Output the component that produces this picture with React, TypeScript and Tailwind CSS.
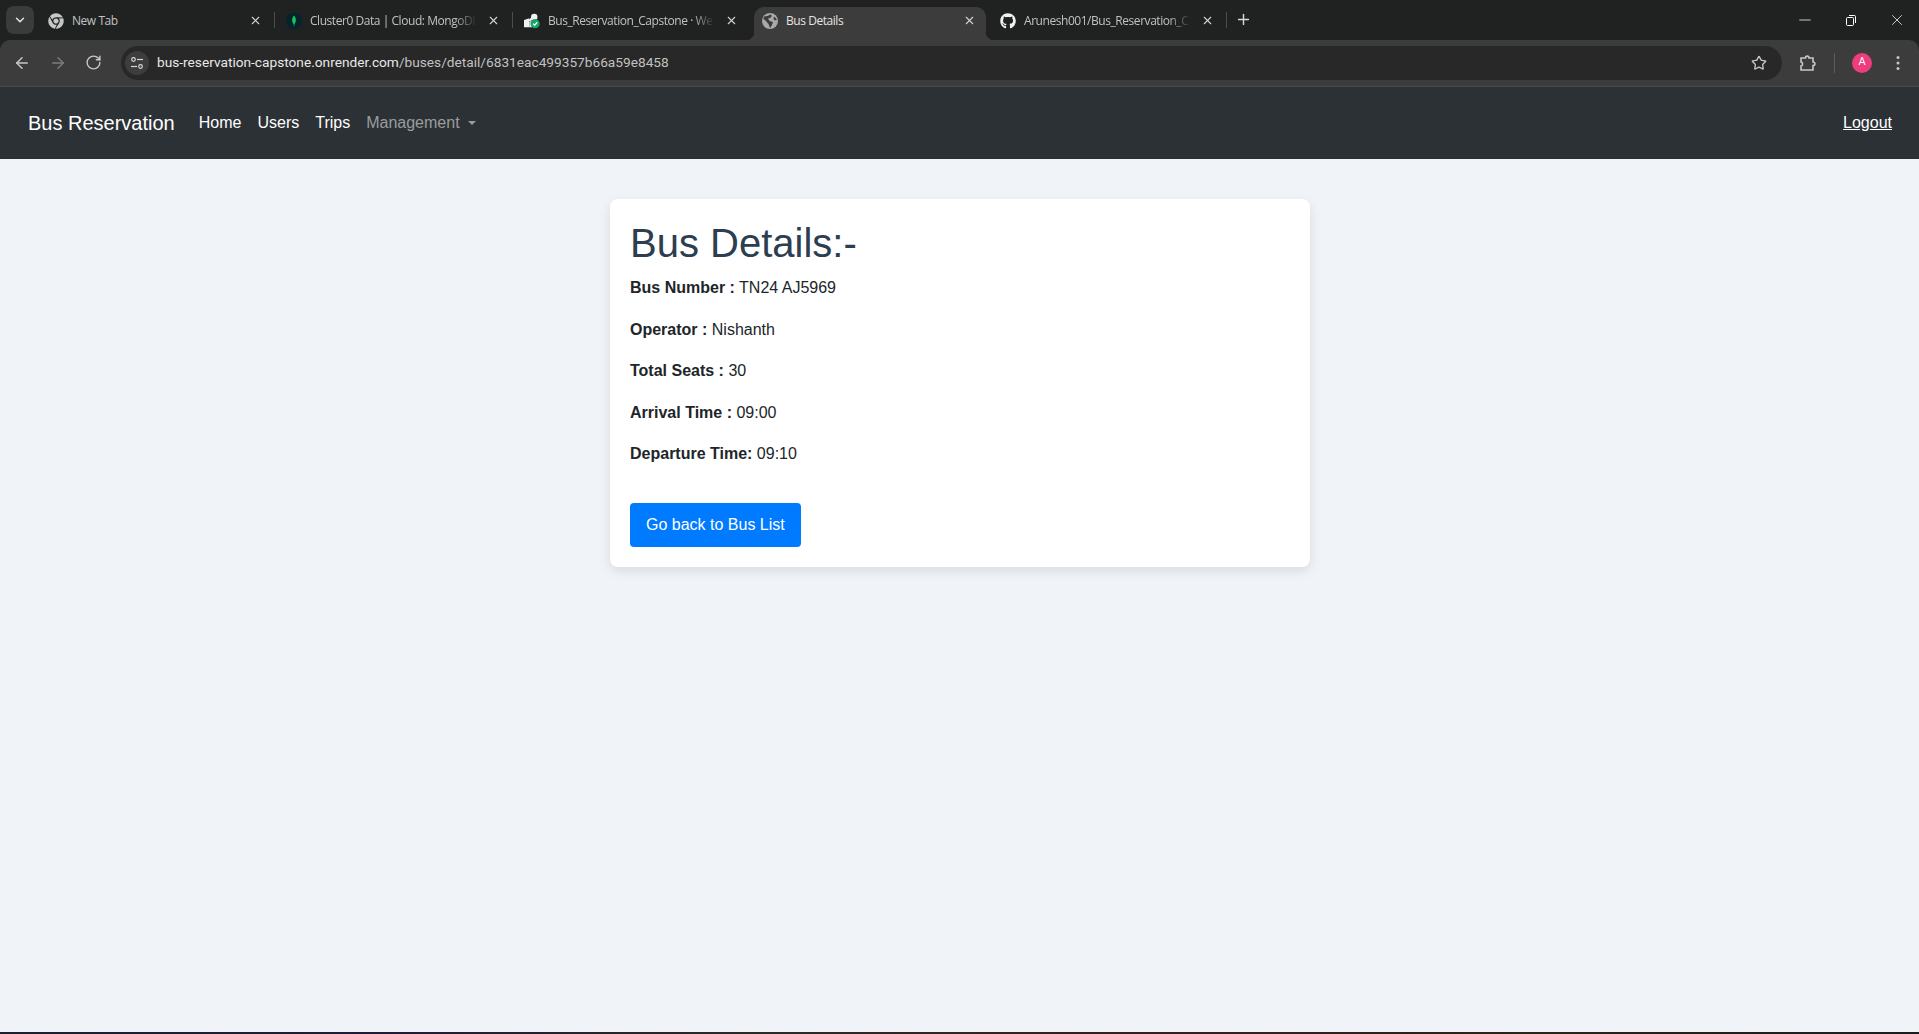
import React from "react";
import { ArrowLeft, ArrowRight, RotateCw, Star, X, Plus, ChevronDown, Minus } from "lucide-react";
import { FaGithub, FaChrome } from "react-icons/fa";

function Leaf() {
  return (
    <svg width="16" height="16" viewBox="0 0 16 16">
      <circle cx="8" cy="8" r="8" fill="#04232d" />
      <path d="M8 2.5C10.4 5 10.6 8.5 8.4 11.2L8.2 13.5H7.8L7.6 11.2C5.4 8.5 5.6 5 8 2.5Z" fill="#13c65c" />
    </svg>
  );
}
function Globe() {
  return (
    <svg width="16" height="16" viewBox="0 0 16 16">
      <circle cx="8" cy="8" r="8" fill="#a8a9a9" />
      <path d="M2 3.5L5.5 3L8.5 1.5L10 3L8 5L6 5.5L7.5 8L11 9L10 12L8 15L6.5 11L3.5 7.5L1.5 6Z" fill="#3c3c3c" />
      <path d="M12 3.5L15 6.5L13 7.5L11.5 6Z" fill="#3c3c3c" />
    </svg>
  );
}
function Deploy() {
  return (
    <svg width="16" height="16" viewBox="0 0 18 18">
      <path d="M0 8L6 6V16H0Z" fill="#f1f1f1" />
      <path d="M6 9L11 4" stroke="#f1f1f1" strokeWidth="2.5" />
      <circle cx="11.5" cy="4.5" r="3.6" fill="#f1f1f1" />
      <path d="M6 16V10.5L9 8.5L9 16Z" fill="#f1f1f1" />
      <circle cx="12.5" cy="12" r="5.2" fill="#12a56b" />
      <path d="M10.2 12L12 13.8L14.9 10.4" stroke="#fff" strokeWidth="1.4" fill="none" />
    </svg>
  );
}

const tabs = [
  { title: "New Tab", icon: <FaChrome size={16} color="#c4c7c5" />, sep: true },
  { title: "Cluster0 Data | Cloud: MongoDI", icon: <Leaf />, sep: true },
  { title: "Bus_Reservation_Capstone · We", icon: <Deploy />, sep: false },
  { title: "Bus Details", icon: <Globe />, active: true, sep: false },
  { title: "Arunesh001/Bus_Reservation_C", icon: <FaGithub size={16} color="#f2f2f2" />, sep: true },
];

function Tab({ t }: { t: (typeof tabs)[number] }) {
  return (
    <div
      className={
        "relative flex h-[33px] w-[232px] shrink-0 items-center pb-[6px] pl-[8px] pr-[10px] rounded-t-[10px] " +
        (t.active ? "bg-[#3c3c3c]" : "")
      }
    >
      {t.active && (
        <>
          <span className="absolute bottom-0 left-[-8px] h-2 w-2 bg-[radial-gradient(circle_at_0_0,#202221_8px,#3c3c3c_8.5px)]" />
          <span className="absolute bottom-0 right-[-8px] h-2 w-2 bg-[radial-gradient(circle_at_100%_0,#202221_8px,#3c3c3c_8.5px)]" />
        </>
      )}
      <span className="flex w-4 shrink-0 items-center justify-center">{t.icon}</span>
      <span
        className={
          "min-w-0 flex-1 overflow-hidden whitespace-nowrap text-[12px] pl-[8px] font-['Open_Sans',sans-serif] tracking-[-0.45px] " +
          (t.active ? "text-[#e4e4e4]" : "text-[#c0c2c1]") +
          (t.title.length > 12 ? " [mask-image:linear-gradient(to_right,#000_86%,transparent_99%)]" : "")
        }
      >
        {t.title}
      </span>
      <X size={13} strokeWidth={2} color="#d2d3d3" className="ml-[8px] shrink-0" />
      {t.sep && <span className="absolute right-[-3px] top-[5px] h-[16px] w-px bg-[#4b4c4c]" />}
    </div>
  );
}

export default function App() {
  return (
    <div className="flex h-[1034px] flex-col overflow-hidden bg-[#f0f4f8] font-['Liberation_Sans',Arial,sans-serif]">
      {/* tab strip */}
      <div className="flex h-[40px] shrink-0 items-end bg-[#202221]">
        <div className="mb-[6px] ml-[6px] flex h-[28px] w-[28px] shrink-0 items-center justify-center rounded-[8px] bg-[#3a3b3b]">
          <ChevronDown size={14} strokeWidth={2.5} color="#e6e6e6" />
        </div>
        <div className="ml-[6px] flex gap-[6px]">
          {tabs.map((t) => (
            <Tab key={t.title} t={t} />
          ))}
        </div>
        <div className="mb-[7px] ml-[9px] flex h-[28px] w-[20px] items-center justify-center">
          <Plus size={17} strokeWidth={2} color="#d8d8d8" />
        </div>
        <div className="mb-[8px] ml-auto flex h-[24px] items-center gap-[28px] pr-[13px]">
          <Minus size={18} strokeWidth={1} color="#ffffff" />
          <svg width="18" height="18" viewBox="0 0 18 18" fill="none" stroke="#fff" strokeWidth="1">
            <rect x="4.5" y="6.5" width="7" height="8" rx="1" />
            <path d="M7 4.5H12.5C13.3 4.5 13.5 5 13.5 5.5V12" />
          </svg>
          <X size={18} strokeWidth={1} color="#ffffff" />
        </div>
      </div>

      {/* toolbar */}
      <div className="flex h-[47px] shrink-0 items-start bg-[#202221]">
        <div className="flex h-[47px] w-full items-center rounded-t-[10px] border-b border-[#4a4a4a] bg-[#3c3c3c] pb-px pl-[13px] pr-[19px]">
          <ArrowLeft size={18} strokeWidth={2} color="#c7c7c7" />
          <ArrowRight size={18} strokeWidth={2} color="#7c7c7c" className="ml-[18px]" />
          <RotateCw size={17} strokeWidth={2} color="#c7c7c7" className="ml-[18px]" />
          <div className="ml-[19px] flex h-[34px] min-w-0 flex-1 items-center rounded-full bg-[#282828] pl-[4px] pr-[15px]">
            <div className="flex h-[24px] w-[24px] items-center justify-center rounded-full bg-[#3d3d3d]">
              <svg width="14" height="14" viewBox="0 0 14 14" fill="none" stroke="#d6d6d6" strokeWidth="1.2">
                <circle cx="3.5" cy="3.5" r="1.8" />
                <path d="M7 3.5H13" />
                <circle cx="10.5" cy="10.5" r="1.8" />
                <path d="M1 10.5H7" />
              </svg>
            </div>
            <span className="ml-[8px] whitespace-nowrap font-['Roboto',sans-serif] text-[13.7px] text-[#e8e8e8]">
              bus-reservation-capstone.onrender.com<span className="text-[#c2c2c2]">/buses/detail/6831eac499357b66a59e8458</span>
            </span>
            <Star size={16} strokeWidth={2} color="#c7c7c7" className="ml-auto" />
          </div>
          <svg width="18" height="18" viewBox="0 0 18 18" fill="none" stroke="#c7c7c7" strokeWidth="1.6" className="ml-[17px]">
            <path d="M2 4H6.5C6.5 1.5 10 1.5 10 4H14V8C16.5 8 16.5 11.5 14 11.5V16H2V12C4 12 4 8 2 8Z" />
          </svg>
          <span className="ml-[17px] h-[20px] w-px bg-[#5c5c5c]" />
          <div className="ml-[17px] flex h-[20px] w-[20px] items-center justify-center rounded-full bg-[#ee3d7c] font-['Roboto',sans-serif] text-[11px] text-white">
            A
          </div>
          <svg width="4" height="16" viewBox="0 0 4 16" fill="#c7c7c7" className="ml-[24px]">
            <circle cx="2" cy="2.5" r="1.5" />
            <circle cx="2" cy="8" r="1.5" />
            <circle cx="2" cy="13.5" r="1.5" />
          </svg>
        </div>
      </div>

      {/* site navbar */}
      <nav className="flex h-[72px] shrink-0 items-center bg-[#2c3136] pl-[28px] pr-[27px]">
        <a className="mr-[16px] text-[20px] leading-[30px] text-white">Bus Reservation</a>
        <a className="px-[8px] text-[16px] text-white">Home</a>
        <a className="px-[8px] text-[16px] text-white">Users</a>
        <a className="px-[8px] text-[16px] text-white">Trips</a>
        <a className="flex items-center px-[8px] text-[16px] text-[#9a9c9e]">
          Management
          <span className="ml-[8px] h-0 w-0 border-x-[4.5px] border-t-[4.5px] border-x-transparent border-t-[#9a9c9e]" />
        </a>
        <a className="ml-auto text-[16px] text-white underline">Logout</a>
      </nav>

      {/* content */}
      <main className="min-h-0 flex-1 pl-px pt-[40px]">
        <section className="mx-auto w-[700px] rounded-[8px] bg-white p-[20px] shadow-[0_4px_12px_rgba(0,0,0,0.1)]">
          <h2 className="mb-[8px] text-[40px] leading-[48px] text-[#2c3e50]">Bus Details:-</h2>
          <p className="mb-[16px] text-[16px] leading-[25.6px] text-[#212529]"><b>Bus Number :</b> TN24 AJ5969</p>
          <p className="mb-[16px] text-[16px] leading-[25.6px] text-[#212529]"><b>Operator :</b> Nishanth</p>
          <p className="mb-[16px] text-[16px] leading-[25.6px] text-[#212529]"><b>Total Seats :</b> 30</p>
          <p className="mb-[16px] text-[16px] leading-[25.6px] text-[#212529]"><b>Arrival Time :</b> 09:00</p>
          <p className="mb-[16px] text-[16px] leading-[25.6px] text-[#212529]"><b>Departure Time:</b> 09:10</p>
          <a className="mt-[20px] inline-block rounded-[4px] bg-[#007bff] px-[16px] py-[10px] align-top text-[16px] leading-[24px] text-white">
            Go back to Bus List
          </a>
        </section>
      </main>

      <div className="h-[2px] shrink-0 bg-[linear-gradient(to_right,#1b2030,#221a35,#2c2a24,#3a1c1e,#2a2418,#1c1c1c)]" />
    </div>
  );
}
